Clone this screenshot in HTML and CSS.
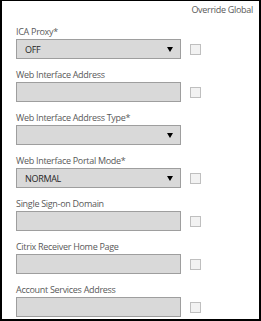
FILE: index.html
```html
<!DOCTYPE html>
<html lang="en">

<head>
  <meta charset="UTF-8">
  <title>Global Settings Override</title>
  <link rel="stylesheet" href="styles.css">
</head>

<body>
  <div class="frame">
    <div class="head">Override Global</div>

    <div class="row">
      <label>ICA Proxy*</label>
      <div class="line">
        <div class="field select">OFF<svg class="arrow" width="6" height="5" viewBox="0 0 6 5"><polygon points="0,0 6,0 3,5" /></svg></div>
        <span class="check"></span>
      </div>
    </div>

    <div class="row">
      <label>Web Interface Address</label>
      <div class="line">
        <div class="field"></div>
        <span class="check"></span>
      </div>
    </div>

    <div class="row">
      <label>Web Interface Address Type*</label>
      <div class="line">
        <div class="field select"><svg class="arrow" width="6" height="5" viewBox="0 0 6 5"><polygon points="0,0 6,0 3,5" /></svg></div>
      </div>
    </div>

    <div class="row">
      <label>Web Interface Portal Mode*</label>
      <div class="line">
        <div class="field select">NORMAL<svg class="arrow" width="6" height="5" viewBox="0 0 6 5"><polygon points="0,0 6,0 3,5" /></svg></div>
        <span class="check"></span>
      </div>
    </div>

    <div class="row">
      <label>Single Sign-on Domain</label>
      <div class="line">
        <div class="field"></div>
        <span class="check"></span>
      </div>
    </div>

    <div class="row">
      <label>Citrix Receiver Home Page</label>
      <div class="line">
        <div class="field"></div>
        <span class="check"></span>
      </div>
    </div>

    <div class="row">
      <label>Account Services Address</label>
      <div class="line">
        <div class="field"></div>
        <span class="check"></span>
      </div>
    </div>
  </div>
</body>

</html>
```

FILE: styles.css
```css
* {
  margin: 0px;
  padding: 0px;
  box-sizing: border-box;
}

body {
  background-color: white;
  font-family: "Open Sans", "DejaVu Sans", sans-serif;
  font-size: 9px;
  letter-spacing: -0.3px;
  color: hsl(0, 0%, 35%);
}

.frame {
  width: 261px;
  height: 321px;
  border: 2px solid black;
  border-top-width: 1px;
  padding: 2px 0px 0px 14px;
  background-color: white;
  overflow: hidden;
}

.head {
  height: 22px;
  line-height: 14px;
  text-align: right;
  padding-right: 6px;
}

.row {
  height: 43px;
}

.row label {
  display: block;
  height: 14px;
  line-height: 14px;
}

.line {
  display: flex;
  align-items: center;
  gap: 9px;
}

.field {
  width: 165px;
  height: 20px;
  border: 1px solid hsl(0, 0%, 62%);
  background-color: hsl(0, 0%, 85%);
}

.select {
  display: flex;
  align-items: center;
  justify-content: space-between;
  padding: 0px 7px 0px 8px;
  color: hsl(0, 0%, 15%);
}

.arrow {
  fill: black;
  margin-left: auto;
}

.check {
  width: 11px;
  height: 11px;
  border: 1px solid hsl(0, 0%, 75%);
  background-color: hsl(0, 0%, 95%);
}
```
